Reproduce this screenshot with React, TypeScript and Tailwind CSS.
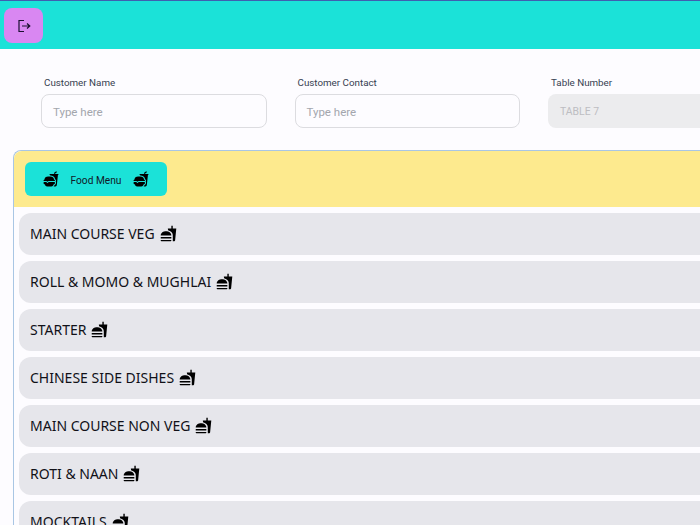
import { IoFastFood } from "react-icons/io5";
import { MdFastfood } from "react-icons/md";

const categories = [
  "MAIN COURSE VEG",
  "ROLL & MOMO & MUGHLAI",
  "STARTER",
  "CHINESE SIDE DISHES",
  "MAIN COURSE NON VEG",
  "ROTI & NAAN",
  "MOCKTAILS",
];

const Field = ({ label, value }: { label: string; value?: string }) => (
  <div className="w-[225.5px] shrink-0 font-['Roboto',sans-serif]">
    <div className="pl-[3px] h-[24px] text-[9.8px] leading-[25px] text-[#374151]">{label}</div>
    {value ? (
      <div className="h-[34px] rounded-lg bg-[#ececee] px-3 text-[10.4px] leading-[35px] text-[#bdbdc2]">{value}</div>
    ) : (
      <div className="h-[34px] rounded-lg border border-[#dcdce0] bg-[#fdfcff] px-[11px] text-[11.5px] leading-[34px] text-[#a3a6ad]">Type here</div>
    )}
  </div>
);

export default function App() {
  return (
    <div className="w-[700px] h-[525px] overflow-hidden bg-[#fdfcff] font-['Noto_Sans',sans-serif]">
      <div className="h-[49px] border-t border-[#3f5fb0] bg-[#1be2d8] pt-[7px] pl-1">
        <button className="flex h-[35px] w-[39px] items-center justify-center rounded-lg bg-[#d987f2] text-[#1a1030]">
          <svg viewBox="0 0 14 14" className="h-[14px] w-[14px]" fill="none" stroke="currentColor" strokeWidth="1.2">
            <path d="M7 1.5H2v11h5" />
            <path d="M5 7h8M10 4.5 12.8 7 10 9.5" />
          </svg>
        </button>
      </div>
      <div className="flex w-[1000px] gap-[28px] pl-[41px] pt-[21px]">
        <Field label="Customer Name" />
        <Field label="Customer Contact" />
        <Field label="Table Number" value="TABLE 7" />
      </div>
      <div className="ml-[13px] mt-[22px] w-[1000px] rounded-t-lg border-l border-t border-[#a9c6e4]">
        <div className="flex h-[56px] items-center rounded-tl-lg bg-[#fdea8e] pl-[11px]">
          <div className="flex h-[34px] w-[142px] items-center justify-center gap-[8px] rounded-md bg-[#1be2d8] font-['Roboto',sans-serif] text-[10.2px] text-[#111827]">
            <IoFastFood className="h-4 w-4 text-black" />
            <span className="translate-y-[1.5px] px-1">Food Menu</span>
            <IoFastFood className="h-4 w-4 text-black" />
          </div>
        </div>
        <div className="flex flex-col gap-[6px] pl-[5px] pt-[6px]">
          {categories.map((name) => (
            <div key={name} className="flex h-[42px] shrink-0 items-center gap-[5px] rounded-xl bg-[#e6e6eb] pl-[11px] text-sm text-[#111118]">
              <span>{name}</span>
              <MdFastfood className="h-[17px] w-[17px] -translate-y-px text-black" />
            </div>
          ))}
        </div>
      </div>
    </div>
  );
}
